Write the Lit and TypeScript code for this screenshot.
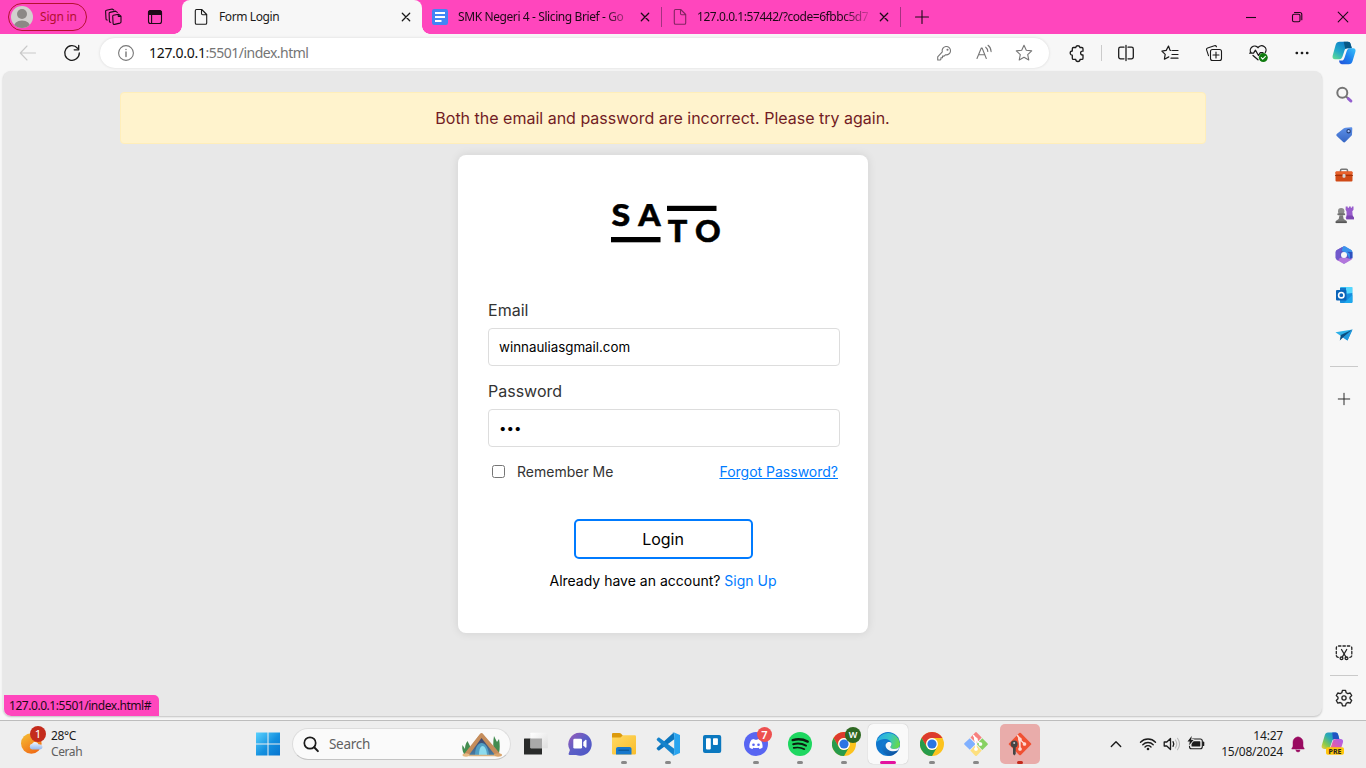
import { LitElement, html, css, svg, TemplateResult } from "lit";
import { customElement, property } from "lit/decorators.js";

/** Wraps vector shapes in a square svg; shapes use a 24-unit grid unless told otherwise. */
const icon = (shapes: unknown, size = 24, grid = 24): TemplateResult => html`<svg
  class="icon" width=${size} height=${size} viewBox="0 0 ${grid} ${grid}"
  fill="none" stroke="currentColor" stroke-width="1.1" stroke-linecap="round" stroke-linejoin="round">${shapes}</svg>`;

const closeX = () => icon(svg`<path d="M8.3 8.3 15.7 15.7M15.7 8.3 8.3 15.7" stroke-width="1.3"/>`);
const page = () => icon(svg`<path d="M7.5 4.5h5.2l5 5v8.5a1.3 1.3 0 0 1-1.3 1.3H7.6a1.3 1.3 0 0 1-1.3-1.3V5.7a1.2 1.2 0 0 1 1.2-1.2ZM12.5 4.8v3.7a1.2 1.2 0 0 0 1.2 1.2h3.8"/>`);

const workspaces = () => icon(svg`
  <path d="M12.4 10.3l5.1-1.1 2.5 2v5.600c0 .7-.4 1.100-1 1.300l-5.400 1.300c-.9.2-1.500-.2-1.500-1.100l-.4-6.900c0-.6.2-1 .7-1.100ZM17.200 9.500v1.400c0 .5.3.7.8.6l1.800-.2"/>
  <path d="M9.700 17.200c-.8.1-1.300-.3-1.300-1.100l-.3-7.600c0-.6.3-1 .8-1.100l5.600-1.300 1.800 1.300"/>
  <path d="M6.300 15c-.8 0-1.300-.4-1.300-1.100L4.600 6.400c0-.6.3-1 .8-1.100l5.700-1.300 1.700 1"/>`);
const tabActions = () => icon(svg`<rect x="5.500" y="5.700" width="13" height="12.800" rx="2"/><path d="M5.500 9.500V7.600a2 2 0 0 1 2-2h9a2 2 0 0 1 2 2v1.900Z" fill="currentColor"/><path d="M8.600 9.500v9"/>`);
const docs = () => icon(svg`<rect x="4" y="4" width="16" height="16" rx="2.200" fill="#4285f4" stroke="none"/><path d="M7 8h10M7 12h10M7 16h6.500" stroke="#fff" stroke-width="2" stroke-linecap="butt"/>`);
const plus = () => icon(svg`<path d="M12 5.500v13M5.500 12h13"/>`);

const back = () => icon(svg`<path d="M19.500 12H4.500M11 5 4.300 12l6.700 7" stroke="#c9c9c9"/>`);
const reload = () => icon(svg`<path d="M17.500 7.200A7.300 7.300 0 1 0 19.300 12M18.700 4.500v4.300h-4.500" stroke-width="1.300"/>`);
const info = () => icon(svg`<circle cx="12" cy="12" r="7.400" stroke="#777"/><path d="M12 11v4.500M12 8.400v.2" stroke="#777" stroke-width="1.400"/>`);
const keyIcon = () => icon(svg`<g stroke="#767676"><path d="M10.300 10.900a4.200 4.200 0 1 1 3.100 2.900l-1.300 1.300h-1.600v1.700H8.900v1.500l-.8.700H5.700v-3.200Z"/><circle cx="15.500" cy="8.800" r=".5"/></g>`);
const readAloud = () => icon(svg`<g stroke="#767676"><path d="M5 17.500 9.300 7h.8l4.200 10.500M6.500 13.700h6.300M13.700 6.200c1.400 1 2.100 2.400 2.100 4.300M16 4.300c2 1.500 3 3.600 3.100 6.300"/></g>`);
const starPath = "M12 4.300l2.300 5 5.400.6-4 3.700 1.100 5.400L12 16.300l-4.800 2.700 1.100-5.400-4-3.700 5.400-.6Z";
const star = () => icon(svg`<path d=${starPath} stroke="#767676"/>`);
const puzzle = () => icon(svg`<path d="M8.500 6.500h2.200a2.200 2.200 0 0 1 4.300 0h1.800c.7 0 1.200.5 1.200 1.200v2.500h-.5a1.900 1.900 0 0 0 0 3.800h.5v3.200c0 .7-.5 1.200-1.200 1.200H15a2.100 2.100 0 0 1-4.200 0H8.500c-.7 0-1.200-.5-1.200-1.200v-3a2.100 2.100 0 0 1 0-4.200V7.700c0-.7.500-1.200 1.200-1.200Z" stroke-width="1.300"/>`);
const split = () => icon(svg`<path d="M10 6.200H6.500a1.800 1.800 0 0 0-1.800 1.800v8a1.800 1.800 0 0 0 1.800 1.800H10M14 6.200h3.500a1.800 1.800 0 0 1 1.800 1.800v8a1.800 1.800 0 0 1-1.800 1.800H14M12 4.500v15" stroke-width="1.300"/>`);
const favorites = () => icon(svg`<path d="M14.500 9.500h5.500M12 9.200 10.500 5 8.200 9.400l-4.300.7 3.300 3.300-.8 4.800 4.400-2.300M14 13.500h6M13 17.200h7M12 9.200l1 .3" stroke-width="1.200"/>`);
const collections = () => icon(svg`<rect x="8.500" y="8.500" width="11" height="11" rx="2"/><path d="M14 11v6M11 14h6M6.500 14.700 4.600 8.900c-.3-.9.100-1.700 1-2l6.800-2.200c.9-.3 1.700.1 2.100 1"/>`);
const essentials = () => icon(svg`<path d="M5.200 12A4.300 4.300 0 0 1 12 6.700 4.300 4.300 0 0 1 19.300 11.500M7 14.500l5 4.300M3.700 12.200h3.800l2-3 3 5.300 1.800-2.800H17" stroke-width="1.300"/><circle cx="17.300" cy="16.600" r="4.500" fill="#107c10" stroke="none"/><path d="m15.300 16.700 1.400 1.400 2.700-2.800" stroke="#fff"/>`);
const more = () => icon(svg`<g fill="currentColor" stroke="none"><rect x="5.500" y="10.700" width="2.600" height="2.600" rx="1"/><rect x="10.700" y="10.700" width="2.600" height="2.600" rx="1"/><rect x="15.900" y="10.700" width="2.600" height="2.600" rx="1"/></g>`);
const copilot = () => icon(svg`
  <defs><linearGradient id="cpa" x1="0" y1="1" x2=".7" y2="0"><stop stop-color="#66e08c"/><stop offset=".45" stop-color="#22a9c9"/><stop offset="1" stop-color="#0b77c8"/></linearGradient>
  <linearGradient id="cpb" x1="1" y1="0" x2="0" y2="1"><stop stop-color="#3ac4fa"/><stop offset=".5" stop-color="#1d82ef"/><stop offset="1" stop-color="#2250d8"/></linearGradient></defs>
  <g stroke="none"><path d="M7.500.8h8.400c1.500 0 2.300.8 2.700 2.200l1.200 4.200h-4.400c-1.600 0-2.400.7-2.900 2.200l-2 6.200c-.6 1.600-1.400 2.600-3 2.600H3c-2 0-2.900-1.500-2.300-3.800L3.600 4C4.300 1.900 5.500.8 7.500.8Z" fill="url(#cpa)"/>
  <path d="M11.700.8h4.200c1.500 0 2.300.8 2.700 2.200l1.200 4.200h-4.400c-.9 0-1.600.3-2.100.8Z" fill="#075785"/>
  <path d="M17 7.200h4.200c2 0 2.800 1.500 2.200 3.600L20.600 20c-.7 2.100-1.900 3.200-3.900 3.200H10c-1.400 0-2.200-.8-2.600-2.200l-.4-1.500h2.500c1.500 0 2.400-1 2.900-2.600l2-6c.6-1.600 1-2.700 2.600-3.700Z" fill="url(#cpb)"/></g>`);

const findIcon = () => icon(svg`<circle cx="10.300" cy="9.800" r="5" stroke="#757575" stroke-width="2"/><path d="m14.300 13.700 1.700 1.600" stroke="#777" stroke-width="2"/><path d="m16.300 15.600 2.700 2.500" stroke="#9460cf" stroke-width="2.800"/>`);
const tag = () => icon(svg`<defs><linearGradient id="tg" x1="0" y1="0" x2="0" y2="1"><stop stop-color="#5d90e8"/><stop offset="1" stop-color="#3666c4"/></linearGradient></defs><path d="M13.500 4.700 19 4.300c.9 0 1.400.5 1.300 1.400L20 11.400c0 .5-.2.900-.6 1.300l-6 6.100c-.8.800-1.700.8-2.500 0L5 13.300c-.9-.8-.8-1.700 0-2.500l6.900-5.500c.5-.4 1-.6 1.600-.6Z" fill="url(#tg)" stroke="none"/><circle cx="16.600" cy="8.200" r="1.700" fill="#a7c6ff" stroke="#243d75"/>`);
const toolbox = () => icon(svg`<path d="M8.500 9V7.500c0-.7.400-1.200 1.200-1.200h4.600c.8 0 1.200.5 1.200 1.200V9" stroke="#777" stroke-width="1.500"/><rect x="3.500" y="8.500" width="17" height="10" rx="1" fill="#d04a17" stroke="none"/><path d="M3.500 12.500h17" stroke="#a4330b"/><rect x="3.500" y="8.500" width="17" height="2.500" rx="1" fill="#e8622d" stroke="none"/><rect x="10.500" y="10.900" width="3" height="3.800" rx="1" fill="#d4d4d4" stroke="none"/>`);
const chess = () => icon(svg`<g stroke="none"><path d="M13.700 3.500h2v1.200h1.300V3.500h1.800v1.200h1.100V3.500h1.600v3.300l-1.200 1.400.5 5.500 1.200 1.200v1.400h-7.800l-.5-2.100 1-1-.2-4.700-.9-1.700Z" fill="#985ccc"/><path d="M14.500 12.500h5.800l1.700 1.800v2h-7.500Z" fill="#7b46b0"/><circle cx="9.200" cy="8.200" r="3.200" fill="#8c8c8c"/><rect x="5.300" y="10.300" width="7.900" height="2" rx="1" fill="#6f6f6f"/><path d="M7.500 12.300h3.400l.8 3.600 2.600 1.900c.7.600.6 2.300-.3 2.300H4.400c-.9 0-1-1.700-.3-2.300l2.600-1.900Z" fill="#797979"/><path d="M3.700 18.500h11v1.600h-11Z" fill="#555"/></g>`);
const m365 = () => icon(svg`<g stroke="none"><path d="M12 3.200 19 7c.9.500 1.300 1.300 1.300 2.400V15L12 20.800 3.700 15V9.400C3.700 8.300 4.100 7.500 5 7Z" fill="#5b55c4"/><path d="M10.600 3.800 5 7c-.9.600-1.300 1.300-1.300 2.400v5.200c0 1.100.4 1.900 1.300 2.400l1.500.8c1.300-.8 1.700-1.700 1.700-2.900V9.800Z" fill="#7259cc"/><path d="M11 3.700c1-.6 1.900-.6 2.900 0l5 3c.9.500 1.400 1.300 1.400 2.400v5.500c0 1.200-1.400 2-2.500 1.400L15 11 9.500 7.500Z" fill="#3a94ed"/><path d="m15 8.800 2.800 2v5.100c1.100.6 2.500-.2 2.500-1.400V9Z" fill="#2e50bd"/><path d="m5 17 5.600 3.300c1 .6 1.800.6 2.800 0l5.600-3.200c1-.6 1.300-1.500 1.300-2.500-1.100 1.300-2.400 1.500-3.700.8L12 14l-4.500 1c0 1.200-1 2.300-2.500 2Z" fill="#b276dc"/><circle cx="12" cy="12" r="3" fill="#f7f7f7"/></g>`);
const outlook = () => icon(svg`<g stroke="none"><rect x="8" y="4" width="12.300" height="16" rx="1" fill="#32b8f1"/><path d="M14 4h6.300v6H14Z" fill="#54d8ff"/><path d="M8 5h6v6H8Z" fill="#1377c9"/><path d="m8 13 12.300-3v9a1 1 0 0 1-1 1H9a1 1 0 0 1-1-1Z" fill="#168ddd"/><path d="m12 20 8.300-8v7a1 1 0 0 1-1 1Z" fill="#1da8ed"/><rect x="4" y="7" width="10.500" height="10.500" rx="1" fill="#0a64b9"/></g><circle cx="9.300" cy="12.200" r="2.700" stroke="#fff" stroke-width="1.600"/>`);
const plane = () => icon(svg`<g stroke="none"><path d="M3.500 9.300 20.500 6.500 10 13.800Z" fill="#2cb0e8"/><path d="m20.500 6.500-5 11-5.500-3.700Z" fill="#1591d9"/><path d="M20.500 6.500 8.800 12l-1 5.600 3.200-3.200Z" fill="#0c4e82"/><path d="M11 14.400 20.500 6.500l-5 11Z" fill="#2298dd"/></g>`);
const snip = () => icon(svg`<g stroke-width="1.300"><path d="M6.300 16.300a2 2 0 0 1-2-2V7a2 2 0 0 1 2-2h11.500a2 2 0 0 1 2 2v7.300a2 2 0 0 1-2 2" stroke-dasharray="2.400 2"/><path d="m9.500 8.500 4.700 8M14.700 8.500l-4.700 8"/><circle cx="9.500" cy="17.300" r="1.400"/><circle cx="14.500" cy="17.300" r="1.400"/></g>`);
const gear = () => icon(svg`<path d="M10.500 4.300h3l.7 2.400 1.600.9 2.400-.6 1.500 2.600-1.700 1.700v1.500l1.700 1.700-1.500 2.600-2.400-.6-1.600.9-.7 2.400h-3l-.7-2.400-1.600-.9-2.400.6-1.500-2.600L6 12.800v-1.500L4.300 9.600 5.800 7l2.400.6 1.600-.9Z" stroke-width="1.300"/><circle cx="12" cy="12" r="2.100" stroke-width="1.300"/>`);

const weather = () => html`<svg width="24" height="24" viewBox="0 0 24 24"><defs><linearGradient id="sun" x1="0" y1="0" x2=".6" y2="1"><stop stop-color="#f6c236"/><stop offset="1" stop-color="#f06d16"/></linearGradient><linearGradient id="cloud" x1="0" y1="0" x2="0" y2="1"><stop stop-color="#f0f6ff"/><stop offset="1" stop-color="#93b7ef"/></linearGradient></defs>
  <circle cx="10.300" cy="11.500" r="10.300" fill="url(#sun)"/><path d="M11 17.500a2.900 2.900 0 0 1 .2-5.700c.8-2.300 5.200-2.500 6.200.5 5-.3 5.500 5.200 1 5.200Z" fill="url(#cloud)"/></svg>`;
const windows = () => icon(svg`<defs><linearGradient id="win" x1="0" y1="0" x2="24" y2="24" gradientUnits="userSpaceOnUse"><stop stop-color="#5bd3ff"/><stop offset=".55" stop-color="#1490df"/><stop offset="1" stop-color="#0874cf"/></linearGradient></defs><path d="M0 .500h11.500v11H0ZM12.500.500H24v11H12.500ZM0 12.500h11.500v11H0ZM12.500 12.500H24v11H12.500Z" fill="url(#win)" stroke="none"/>`);
const magnifier = () => icon(svg`<circle cx="11" cy="11" r="5.700" stroke-width="1.700"/><path d="m15.200 15.200 3.700 3.900" stroke-width="2"/>`);
const tent = () => html`<svg width="42" height="25" viewBox="0 0 42 25"><defs><linearGradient id="tn" x1="0" y1="0" x2="0" y2="1"><stop stop-color="#3e4268"/><stop offset="1" stop-color="#487da4"/></linearGradient></defs>
  <path d="M3 22C1 18 1 15 1.500 13L4 17c0-3 .5-5 2.500-8L9 14v8ZM33 21c-1-6-1-12 0-17l3 6 2-3c1 5 1 10 0 14Z" fill="#438c50"/>
  <path d="M4 23 18.500 3l2-1.500 2 1.500L38 23Z" fill="#c48b58"/><path d="M8 23 20.500 6 34 23Z" fill="url(#tn)"/>
  <path d="M14 23c0-16 13-16 14 0Z" fill="#519fc5"/><path d="M18 23c0-12 7-12 8 0Z" fill="#8edbed"/>
  <path d="m5.500 21.500 15-19L37 21.500" fill="none" stroke="#c58d5c" stroke-width="3" stroke-linecap="round" stroke-linejoin="round"/>
  <ellipse cx="5" cy="23" rx="3.500" ry="1.700" fill="#e6b983"/><ellipse cx="37" cy="23" rx="4" ry="1.700" fill="#d9a46c"/><path d="M8 23.500h26" stroke="#d8b383" stroke-width="1.500"/></svg>`;

const taskView = () => icon(svg`<defs><linearGradient id="tv" x1="0" y1="0" x2="1" y2="1"><stop stop-color="#fff"/><stop offset="1" stop-color="#dedede"/></linearGradient></defs><g stroke="none"><rect x="0" y="6.500" width="18" height="16" rx=".5" fill="#292b2a"/><rect x="6.500" y=".7" width="17.300" height="15.500" rx=".6" fill="url(#tv)"/><rect x="6.500" y="6.500" width="11.500" height="9.700" fill="#a9a9a9"/></g>`);
const chat = () => icon(svg`<defs><linearGradient id="ch" x1="0" y1="0" x2="1" y2="1"><stop stop-color="#9b5cb8"/><stop offset=".5" stop-color="#5b5fc7"/><stop offset="1" stop-color="#4d55c5"/></linearGradient></defs><g stroke="none"><path d="M12 .700a11.500 11.500 0 1 1-4 22.200H1.500c-1 0-1.200-.8-.8-1.500L1.900 18A11.500 11.500 0 0 1 12 .7Z" fill="url(#ch)"/><rect x="5.300" y="6.800" width="8.700" height="9.800" rx="1.300" fill="#fff"/><path d="m15.300 10 2-2c.5-.5 1.200-.3 1.200.5v6.600c0 .8-.7 1-1.200.5l-2-2Z" fill="#fff"/></g>`);
const folder = () => icon(svg`<defs><linearGradient id="fo" x1="0" y1="0" x2="1" y2="1"><stop stop-color="#ffd963"/><stop offset="1" stop-color="#f9bd2b"/></linearGradient></defs><g stroke="none"><path d="M0 2.300C0 1.500.5 1 1.300 1h6.200c.6 0 1 .2 1.400.6L11 3.700 9 6H0Z" fill="#dc9a0c"/><path d="M0 5.500h8.500L11 3.300h11.600c.8 0 1.400.5 1.400 1.400v16.500c0 .8-.6 1.300-1.400 1.300H1.400C.6 22.500 0 22 0 21.200Z" fill="url(#fo)"/><path d="M4 22.500V17c0-1.200.8-2 2-2h11.500c1.200 0 2 .8 2 2v5.500Z" fill="#1678cc"/><path d="M7 18.300h9.500" stroke="#0c5c9f" stroke-width="1.500"/></g>`);
const vscode = () => icon(svg`<g stroke="none"><path d="m1.200 15.500 16.500-15 .9 6.400L3.500 18.300c-.6.400-1 .4-1.500 0l-1-1c-.5-.5-.4-1.200.2-1.800Z" fill="#0c75bd"/><path d="M1.200 8.500 17.700 23.500l.9-6.400L3.500 5.700c-.6-.4-1-.4-1.500 0l-1 1c-.5.500-.4 1.200.2 1.800Z" fill="#1583cc"/><path d="M17.500.3 24 3v18l-6.500 2.700c-.4.200-.9 0-1.100-.3 1 .3 1.800-.2 1.800-1.300V1.900c0-1.100-.8-1.500-1.800-1.300.2-.3.700-.5 1.100-.3Z" fill="#28a4ef"/></g>`);
const trello = () => icon(svg`<g stroke="none"><rect x="3" y="3" width="18.200" height="18" rx="2" fill="#0b78bf"/><rect x="6" y="6.200" width="4.800" height="11.200" rx=".8" fill="#fff"/><rect x="13" y="6.200" width="4.900" height="6.800" rx=".8" fill="#fff"/></g>`);
const discord = () => icon(svg`<circle cx="12" cy="12" r="12" fill="#5865f2" stroke="none"/><path d="M7.500 7.800c1-.5 1.900-.8 2.800-.9l.5 1c.8-.1 1.600-.1 2.400 0l.5-1c.9.100 1.900.4 2.800.9 1.600 2.400 2.300 4.900 2.100 7.700-1 .8-2 1.300-3.100 1.600l-.8-1.300.8-.4c-2.300.8-4.700.8-7 0l.8.400-.8 1.300c-1.100-.3-2.100-.8-3.100-1.600-.3-2.800.4-5.300 2.100-7.700Z" fill="#fff" stroke="none"/><circle cx="9.500" cy="12.700" r="1.300" fill="#5865f2" stroke="none"/><circle cx="14.500" cy="12.700" r="1.300" fill="#5865f2" stroke="none"/>`);
const spotify = () => icon(svg`<circle cx="12" cy="12" r="12" fill="#1ed760" stroke="none"/><g stroke="#0b1d10"><path d="M4.700 8.100c5.300-1.400 10.500-.9 15 1.500" stroke-width="2.400"/><path d="M5.200 12.200c4.600-1.200 8.900-.7 12.800 1.400" stroke-width="2"/><path d="M5.700 15.900c3.900-.9 7.500-.5 10.700 1.300" stroke-width="1.600"/></g>`);
const chrome = () => icon(svg`<g stroke="none"><circle cx="12" cy="12" r="12" fill="#fcc31e"/><path d="M1.600 6A12 12 0 0 1 22.400 6H12a6 6 0 0 0-5.200 9Z" fill="#dd3a2e"/><path d="M1.600 6A12 12 0 0 0 12 24l5.200-9a6 6 0 0 1-10.400 0Z" fill="#279b4b"/><circle cx="12" cy="12" r="5.900" fill="#fff"/><circle cx="12" cy="12" r="4.600" fill="#2974e3"/></g>`);
const edge = () => icon(svg`<defs><linearGradient id="ea" x1="0" y1=".2" x2="1" y2=".5"><stop stop-color="#28a9e9"/><stop offset=".55" stop-color="#36c5c8"/><stop offset="1" stop-color="#65d94c"/></linearGradient><linearGradient id="eb" x1="0" y1="0" x2="1" y2="1"><stop stop-color="#1380d8"/><stop offset="1" stop-color="#0d4d98"/></linearGradient></defs><g stroke="none"><circle cx="12" cy="12" r="12" fill="#0f76cd"/><path d="M.3 10.800A12 12 0 0 1 24 11.500c.1 4-3 5.700-6.100 5.500-2.300-.1-3.800-.8-3.400-2 .7-1 1.100-1.700 1-3.300-.3-3.300-3.600-5-7.500-4.800C4.500 7.200 1.700 8.500.3 10.800Z" fill="url(#ea)"/><path d="M8.300 9C2.800 12.500 5.300 22.500 14 23.800c3.300-.5 6.300-2.400 8.200-5.300.5-.9-.1-1.100-.8-.8-5.400 2.500-11.300.7-11.800-4-.1-1.400.5-2.500 1.700-3.300-.5-.9-1.700-1.400-3-1.400Z" fill="url(#eb)"/><path d="M15.500 11.800c0 1.300-.5 2.200-1.100 3-.3 1.100 1 2.100 3.300 2.200 2.500.1 4.400-.7 5.400-2-.2 2-.7 2.900-1.700 3.400-4.300 2-11.500.2-11.800-4.700-.1-1.400.5-2.500 1.700-3.300 1.900-.8 4.200-.2 4.200 1.400Z" fill="#f5f7f8"/></g>`);
const branch = (c: string) => svg`<g stroke=${c} fill=${c}><path d="M9.500 3.500 12 6.500v11M12 7.500l4.500 4.500" stroke-width="1.400"/><circle cx="12" cy="7.200" r="1.200"/><circle cx="12" cy="17" r="1.300"/><circle cx="16.500" cy="12" r="1.300"/></g>`;
const gitColor = () => icon(svg`<g stroke="none"><path d="m6.500 5.500 4.500-4.800c.7-.8 1.300-.8 2 0l4.700 4.800-5.500 5.700Z" fill="#f7807f"/><path d="m18.300 6.200 5.100 5c.6.600.6 1.200 0 1.800L18.300 18l-5.500-6Z" fill="#87d162"/><path d="m12 12.700 5.700 5.700-4.700 5c-.7.700-1.300.7-2 0l-4.700-5Z" fill="#fddf7d"/><path d="m5.800 6.200 5.700 5.800-5.700 5.800-5.200-5c-.6-.6-.6-1.200 0-1.700Z" fill="#80b0ff"/></g>${branch("#fff")}`);
const gitRed = () => icon(svg`<rect x="3.700" y="3.700" width="16.600" height="16.600" rx="1.200" transform="rotate(45 12 12)" fill="#f05133" stroke="none"/>${branch("#ffd9d2")}<g stroke="none" fill="#454545"><circle cx="6.200" cy="12" r="3.500"/><path d="M5 14h2.700v8L6.300 23.500 5 22Z"/></g><circle cx="6.200" cy="11" r="1" fill="#c9c9c9" stroke="none"/>`);

const chevron = () => icon(svg`<path d="m7.300 14.500 4.700-4.700 4.700 4.700" stroke-width="1.400"/>`);
const wifi = () => icon(svg`<g stroke-width="1.400"><path d="M4.500 10.200a10.500 10.500 0 0 1 15 0M6.800 12.700a7.300 7.300 0 0 1 10.400 0M9 15a4.300 4.300 0 0 1 6 0"/></g><circle cx="12" cy="17" r="1.300" fill="currentColor" stroke="none"/>`);
const volume = () => icon(svg`<path d="M4.200 10h2.600l3.700-3.500v11L6.800 14H4.200ZM13 9.700c1 1.500 1 3.100 0 4.600" stroke-width="1.300"/><path d="M15.400 8c1.700 2.500 1.700 5.500 0 8M17.500 6.300c2.500 3.500 2.500 7.900 0 11.400" stroke="#b8b8b8"/>`);
const battery = () => icon(svg`<rect x="5.500" y="7" width="12.800" height="9.700" rx="2"/><rect x="7.500" y="9.200" width="8.800" height="5.300" rx=".6" fill="currentColor" stroke="none"/><path d="M19.400 10.500v2.700" stroke-width="1.800"/><path d="M7.700 4 3.500 9.500h2.300l-.7 3.800L9.600 8H7.200Z" fill="currentColor" stroke="#eee" stroke-width="1.600" paint-order="stroke"/>`);
const bell = () => icon(svg`<path d="M12 5a5 5 0 0 1 5 5v4.300l1.300 2.700H5.700L7 14.300V10a5 5 0 0 1 5-5ZM10 18h4a2 2 0 0 1-4 0Z" fill="#990a60" stroke="#990a60" stroke-width=".5"/>`);
const copilotPre = () => html`<svg width="26" height="26" viewBox="0 0 26 26"><defs><linearGradient id="pa" x1="1" y1="0" x2="0" y2="1"><stop stop-color="#147fe0"/><stop offset=".45" stop-color="#2dadb1"/><stop offset=".75" stop-color="#8ac94b"/><stop offset="1" stop-color="#f4ce3f"/></linearGradient><linearGradient id="pb" x1="1" y1="0" x2="0" y2="1"><stop stop-color="#a660ef"/><stop offset=".5" stop-color="#dc5bb5"/><stop offset="1" stop-color="#fa8968"/></linearGradient></defs>
  <path d="M8 1.500h7.500c1.600 0 2.200.7 2.600 2L19.300 8h-4.500c-1.500 0-2.200.8-2.700 2.300l-1.800 5.200c-.6 1.500-1.300 2.400-3 2.400H4c-2 0-2.800-1.500-2.200-3.600L4.700 4.500C5.300 2.400 6.200 1.500 8 1.500Z" fill="url(#pa)"/><path d="M12.300 1.500h3.200c1.600 0 2.200.7 2.600 2L19.300 8h-4.500c-.8 0-1.400.3-1.900.8Z" fill="#2053c3"/>
  <path d="M16.500 8h4c2.100 0 3 1.300 2.400 3.500l-2.600 8.200c-.7 2-1.800 3-3.700 3h-6l-2-4.800c1.300-.2 1.900-1.100 2.400-2.400l1.800-5.200C13.300 8.700 14.300 8 16.500 8Z" fill="url(#pb)"/>
  <rect x="6" y="16.200" width="18" height="7.600" rx="1.800" fill="#ffc60b"/><text x="15" y="22.500" text-anchor="middle" class="pre" textLength="13">PRE</text></svg>`;

const baseStyles = css`
  * { box-sizing: border-box; }
  svg { display: block; flex: none; }
  .cell { display: flex; align-items: center; justify-content: center; flex: none; }
`;

@customElement("tab-strip")
class TabStrip extends LitElement {
  static styles = [baseStyles, css`
    :host { display: flex; height: 34px; background: #ff46bd; color: #1d0a17; font: 12px/16px "Noto Sans", "Open Sans", sans-serif; align-items: flex-start; }
    .profile { display: flex; align-items: center; gap: 7px; width: 79px; height: 28px; margin: 3px 5px 0 8px; padding-left: 2px; border: 1px solid #b5102f; border-radius: 14px; color: #b3102f; }
    .signin { letter-spacing: -.2px; font-size: 12px; white-space: nowrap; }
    .tool { width: 42px; height: 34px; }
    .tab { position: relative; display: flex; align-items: center; height: 34px; flex: none; }
    .active { width: 240px; margin-left: 6px; padding: 0 4px 0 7px; background: #f7f7f7; border-radius: 8px 8px 0 0; color: #1b1b1b; }
    .active::before, .active::after { content: ""; position: absolute; bottom: 0; width: 8px; height: 8px; }
    .active::before { left: -8px; background: radial-gradient(circle at 0 0, transparent 7.500px, #f7f7f7 8px); }
    .active::after { right: -8px; background: radial-gradient(circle at 100% 0, transparent 7.500px, #f7f7f7 8px); }
    .title { flex: 1; min-width: 0; margin: 0 3px 0 6px; white-space: nowrap; letter-spacing: -.4px; }
    .fade { -webkit-mask-image: linear-gradient(to right, #000 85%, rgba(0, 0, 0, .2) 100%); mask-image: linear-gradient(to right, #000 85%, rgba(0, 0, 0, .2) 100%); }
    .tight { letter-spacing: -.45px; margin-left: 5px; margin-right: 4px; }
    .rest { width: 239px; padding: 0 4px 0 6px; }
    .third { width: 238px; }
    .dim { opacity: .55; }
    .rule { width: 1px; height: 20px; margin-top: 7px; background: #a43280; flex: none; }
    .plus { width: 42px; height: 34px; }
    .controls { display: flex; margin-left: auto; }
    .control { width: 46px; height: 34px; }
  `];
  render() {
    return html`
      <div class="profile">
        <svg width="22" height="22" viewBox="0 0 22 22"><defs><clipPath id="av"><circle cx="11" cy="11" r="11"/></clipPath></defs><g clip-path="url(#av)"><rect width="22" height="22" fill="#d2d0ce"/><circle cx="11" cy="8" r="5" fill="#8b8885"/><path d="M2.500 22c0-4.500 3.500-7.500 8.500-7.500s8.500 3 8.500 7.500Z" fill="#8b8885"/></g></svg>
        <span class="signin">Sign in</span>
      </div>
      <div class="cell tool">${workspaces()}</div>
      <div class="cell tool">${tabActions()}</div>
      <div class="tab active">${page()}<span class="title">Form Login</span>${closeX()}</div>
      <div class="tab rest">${docs()}<span class="title fade">SMK Negeri 4 - Slicing Brief - Go</span>${closeX()}</div>
      <div class="rule"></div>
      <div class="tab rest third"><span class="dim">${page()}</span><span class="title fade tight">127.0.0.1:57442/?code=6fbbc5d7</span>${closeX()}</div>
      <div class="rule"></div>
      <div class="cell plus">${plus()}</div>
      <div class="controls">
        <div class="cell control">${icon(svg`<path d="M7 12.500h10" stroke-linecap="butt"/>`)}</div>
        <div class="cell control">${icon(svg`<rect x="7.500" y="9.300" width="7.500" height="7.500" rx="1.500"/><path d="M9.500 7.500h5.300a2 2 0 0 1 2 2v5.300"/>`)}</div>
        <div class="cell control">${icon(svg`<path d="m7.200 7.200 9.600 9.600M16.800 7.200l-9.600 9.600"/>`)}</div>
      </div>`;
  }
}

@customElement("address-toolbar")
class AddressToolbar extends LitElement {
  static styles = [baseStyles, css`
    :host { display: flex; align-items: center; height: 37px; padding: 0 0 0 6px; background: #f7f7f7; color: #1b1b1b; }
    .btn { width: 44px; height: 37px; }
    .field { display: flex; align-items: center; width: 949px; height: 30px; margin-left: 6px; padding: 0 5px 0 14px; border-radius: 15px; background: #fff; box-shadow: 0 0 3px rgba(0, 0, 0, .13); }
    .url { flex: 1; margin-left: 11px; font: 14px/20px "Noto Sans", sans-serif; letter-spacing: -.52px; color: #757575; }
    .host { color: #111; letter-spacing: -.3px; }
    .slot { width: 40px; }
    .puzzle { width: 40px; margin-left: 8px; }
    .rule { width: 1px; height: 16px; margin: 0 2px 0 4px; background: #cbcbcb; }
    .copilot { width: 40px; }
  `];
  render() {
    return html`
      <div class="cell btn">${back()}</div>
      <div class="cell btn">${reload()}</div>
      <div class="field">${info()}<span class="url"><span class="host">127.0.0.1</span>:5501/index.html</span>
        <div class="cell slot">${keyIcon()}</div><div class="cell slot">${readAloud()}</div><div class="cell slot">${star()}</div>
      </div>
      <div class="cell puzzle">${puzzle()}</div>
      <div class="rule"></div>
      ${[split, favorites, collections, essentials, more].map((i) => html`<div class="cell btn">${i()}</div>`)}
      <div class="cell copilot">${copilot()}</div>`;
  }
}

@customElement("side-bar")
class SideBar extends LitElement {
  static styles = [baseStyles, css`
    :host { display: flex; flex-direction: column; align-items: center; width: 43px; padding: 4px 1px 0 0; color: #242424; }
    .item { width: 40px; height: 40px; }
    .rule { width: 28px; height: 1px; background: #cacaca; }
    .upper { margin: 11px 0 12px; }
    .lower { margin: 2px 0; }
    .spring { flex: 1; }
    .end { height: 2px; }
    .small { transform: scale(.88); }
  `];
  render() {
    return html`
      ${[findIcon, tag, toolbox, chess, m365, outlook, plane].map((i) => html`<div class="cell item">${i()}</div>`)}
      <div class="rule upper"></div>
      <div class="cell item small">${plus()}</div>
      <div class="spring"></div>
      <div class="cell item">${snip()}</div>
      <div class="rule lower"></div>
      <div class="cell item">${gear()}</div>
      <div class="end"></div>`;
  }
}

@customElement("login-page")
class LoginPage extends LitElement {
  static styles = [baseStyles, css`
    :host { display: flex; flex-direction: column; align-items: center; position: relative; background: #e8e8e8; border-radius: 8px; box-shadow: 0 1px 2px rgba(0, 0, 0, .22); font: 16px/20px Inter, sans-serif; overflow: hidden; }
    .alert { width: 1086px; height: 52px; margin-top: 21px; padding: 15px; border: 1px solid #ffeeba; border-radius: 4px; background: #fff3cd; color: #721c24; text-align: center; }
    .card { width: 410px; height: 478px; margin-top: 11px; padding: 49px 28px 0 30px; border-radius: 8px; background: #fff; box-shadow: 0 0 10px rgba(0, 0, 0, .1); }
    .logo { margin: 0 0 56px 120px; }
    .mark { font: 900 31px Lato, sans-serif; stroke: #000; stroke-width: .5px; }
    label { display: block; color: #333; margin-bottom: 8px; padding-left: .5px; }
    .input { display: block; width: 352px; height: 38px; margin-bottom: 15px; padding: 0 10.500px; border: 1px solid #ddd; border-radius: 4px; outline: none; background: #fff; color: #000; font: 13.333px Inter, sans-serif; }
    .options { display: flex; align-items: center; padding: 0 1.500px 0 4px; height: 20px; font-size: 14px; color: #333; }
    .check { width: 13px; height: 13px; margin: -1px 12.500px 0 0; }
    .remember { flex: 1; }
    .link { color: #007bff; text-decoration: none; }
    .under { text-decoration: underline; }
    .login { display: block; width: 179px; height: 40px; margin: 37px 0 12px 86px; padding: 0; border: 2px solid #007bff; border-radius: 5px; background: #fff; color: #000; font: 16px Inter, sans-serif; }
    .signup { text-align: center; font-size: 14px; width: 351px; color: #000; }
    .status { position: absolute; left: 1px; bottom: 0; width: 155px; height: 21px; padding-left: 5px; border-radius: 0 5px 0 7px; background: #ff46bd; color: #1d0a17; font: 12px/21px "Noto Sans", sans-serif; letter-spacing: -.45px; white-space: nowrap; }
  `];
  render() {
    return html`
      <div class="alert" role="alert">Both the email and password are incorrect. Please try again.</div>
      <form class="card">
        <svg class="logo" width="116" height="40" viewBox="-3 0 116 40">
          <g class="mark"><text x=".6" y="22.400" textLength="18.700" lengthAdjust="spacingAndGlyphs">S</text><text x="27.300" y="22.400" textLength="22.400" lengthAdjust="spacingAndGlyphs">A</text><text x="56.700" y="37.800" textLength="19.600" lengthAdjust="spacingAndGlyphs">T</text><text x="84" y="37.800" textLength="25.700" lengthAdjust="spacingAndGlyphs">O</text></g>
          <rect x="0" y="33" width="49.500" height="5.300"/><rect x="56" y="1.800" width="49.500" height="5.200"/>
        </svg>
        <label for="email">Email</label>
        <input class="input" id="email" type="text" .value=${"winnauliasgmail.com"}>
        <label for="password">Password</label>
        <input class="input" id="password" type="password" .value=${"123"}>
        <div class="options"><input class="check" type="checkbox"><span class="remember">Remember Me</span><a class="link under" href="#">Forgot Password?</a></div>
        <button class="login" type="button">Login</button>
        <div class="signup">Already have an account? <a class="link" href="#">Sign Up</a></div>
      </form>
      <div class="status">127.0.0.1:5501/index.html#</div>`;
  }
}

interface App { draw: () => TemplateResult; badge?: string; badgeColor?: string; state?: "running" | "focused" | "alert"; }
const apps: App[] = [
  { draw: taskView }, { draw: chat }, { draw: folder, state: "running" }, { draw: vscode, state: "running" },
  { draw: trello }, { draw: discord, badge: "7", badgeColor: "red", state: "running" }, { draw: spotify, state: "running" },
  { draw: chrome, badge: "W", badgeColor: "green", state: "running" }, { draw: edge, state: "focused" },
  { draw: chrome, state: "running" }, { draw: gitColor, state: "running" }, { draw: gitRed, state: "alert" },
];

@customElement("task-bar")
class TaskBar extends LitElement {
  @property({ attribute: false }) items: App[] = apps;
  static styles = [baseStyles, css`
    :host { box-sizing: border-box; display: flex; align-items: center; height: 48px; padding: 0 0 1px 20px; border-top: 1px solid #bdbdbd; background: #eee; color: #1b1b1b; font: 12px/16px "Noto Sans", sans-serif; }
    .weather { display: flex; position: relative; width: 235px; padding-left: 1px; gap: 6px; align-items: center; }
    .count { position: absolute; left: 10px; top: -2px; width: 16px; height: 16px; border-radius: 8px; background: #c42b1c; color: #fff; font-size: 11.500px; text-align: center; }
    .reading { display: flex; flex-direction: column; letter-spacing: -.4px; }
    .muted { color: #606060; letter-spacing: -.4px; }
    .start { width: 25px; }
    .search { display: flex; align-items: center; width: 219px; height: 32px; margin: 0 3px 0 12px; padding: 0 7px 0 6px; border: 1px solid #ddd; border-bottom-color: #c4c4c4; border-radius: 16px; background: #fafafa; }
    .hint { flex: 1; margin-left: 6px; color: #606060; font-size: 13.500px; letter-spacing: -.3px; }
    .app { position: relative; width: 44px; height: 46px; }
    .plate { width: 40px; height: 40px; border-radius: 5px; }
    .focused .plate { background: #f9f9f9; box-shadow: 0 0 1px rgba(0, 0, 0, .3); }
    .alert .plate { background: #e9acaa; }
    .bar { position: absolute; left: 19px; bottom: 3px; width: 6px; height: 3px; border-radius: 2px; background: #888; }
    .focused .bar { left: 14px; width: 16px; background: #e3139f; }
    .alert .bar { background: #c42b1c; }
    .badge { position: absolute; left: 23px; top: 6px; width: 15px; height: 15px; border-radius: 8px; color: #fff; font: 600 11px/15px "Noto Sans", sans-serif; text-align: center; }
    .red { background: #ed5050; }
    .green { background: #2e6822; font-size: 9px; width: 16px; height: 16px; }
    .tray { display: flex; align-items: center; margin-left: auto; }
    .chev { width: 40px; }
    .wifi { width: 24px; }
    .vol { width: 23px; }
    .bat { width: 26px; }
    .clock { width: 74px; text-align: right; white-space: nowrap; letter-spacing: -.2px; }
    .bell { width: 29px; }
    .co { width: 43px; padding-right: 1px; margin-right: 11px; }
    .pre { font: 700 7px "Noto Sans", sans-serif; fill: #222; }
  `];
  render() {
    return html`
      <div class="weather">${weather()}<span class="count">1</span><div class="reading"><span>28°C</span><span class="muted">Cerah</span></div></div>
      <div class="cell start">${windows()}</div>
      <div class="search">${magnifier()}<span class="hint">Search</span>${tent()}</div>
      ${this.items.map((a) => html`<div class="cell app ${a.state ?? ""}"><div class="cell plate">${a.draw()}</div>
        ${a.badge ? html`<span class="badge ${a.badgeColor}">${a.badge}</span>` : null}${a.state ? html`<span class="bar"></span>` : null}</div>`)}
      <div class="tray">
        <div class="cell chev">${chevron()}</div><div class="cell wifi">${wifi()}</div><div class="cell vol">${volume()}</div><div class="cell bat">${battery()}</div>
        <div class="clock">14:27<br>15/08/2024</div>
        <div class="cell bell">${bell()}</div><div class="cell co">${copilotPre()}</div>
      </div>`;
  }
}

@customElement("app-root")
class AppRoot extends LitElement {
  static styles = css`
    :host { display: flex; flex-direction: column; width: 1366px; height: 768px; overflow: hidden; background: #f7f7f7; }
    .main { display: flex; height: 649px; flex: none; }
    .page { width: 1320px; height: 645px; margin-left: 3px; box-sizing: border-box; }
  `;
  render() {
    return html`<tab-strip></tab-strip><address-toolbar></address-toolbar>
      <div class="main"><login-page class="page"></login-page><side-bar></side-bar></div>
      <task-bar></task-bar>`;
  }
}
